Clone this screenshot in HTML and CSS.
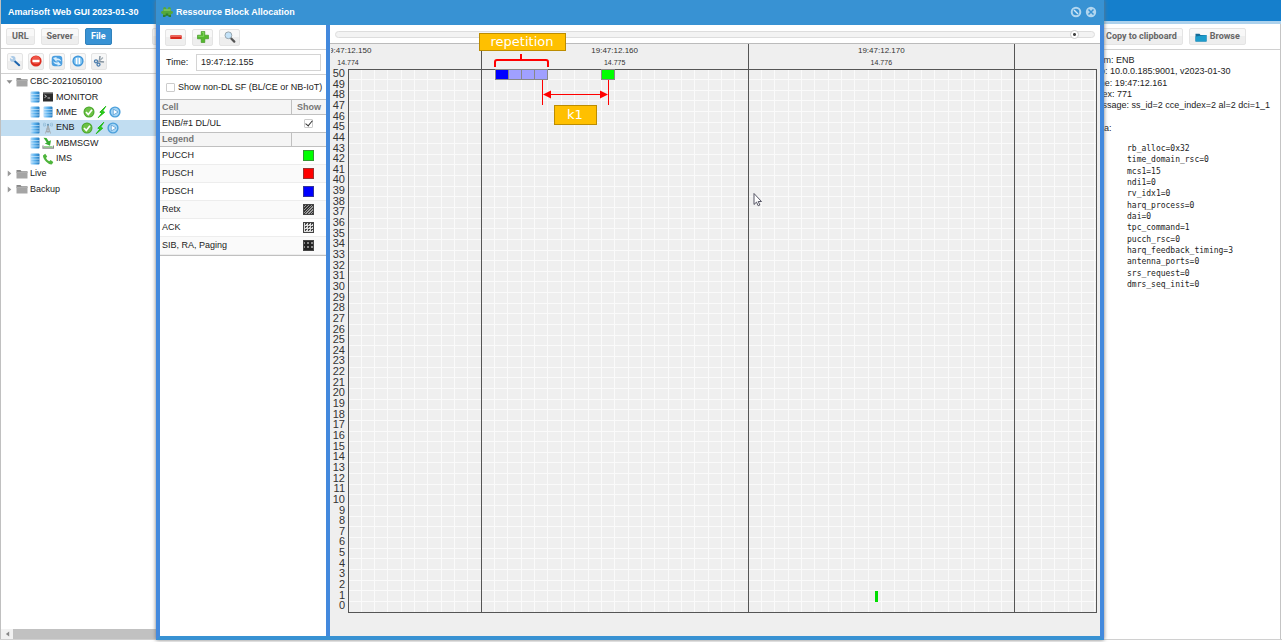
FILE: index.html
```html
<!DOCTYPE html>
<html lang="en">
<head>
<meta charset="utf-8">
<title>Amarisoft Web GUI</title>
<link rel="stylesheet" href="styles.css">
</head>
<body>
<svg class="defs" aria-hidden="true">
  <defs>
    <linearGradient id="gBlue" x1="0" x2="1"><stop offset="0" stop-color="#b5dcfa"/><stop offset=".45" stop-color="#5db4f0"/><stop offset="1" stop-color="#2479bd"/></linearGradient>
    <symbol id="db" viewBox="0 0 12 12"><rect x="1.500" y=".5" width="9" height="11" rx="1" fill="url(#gBlue)"/><path d="M1.500 3.500h9M1.500 6.200h9M1.500 9h9" stroke="#dff1fd" stroke-width=".6"/></symbol>
    <symbol id="term" viewBox="0 0 12 12"><rect x="1" y="1.500" width="10" height="9" fill="#2c2c2c"/><path d="M1 2h10" stroke="#888"/><path d="M2.500 4l2 1.300-2 1.300M5.500 7h2.500" stroke="#eee" stroke-width=".8" fill="none"/></symbol>
    <symbol id="ok" viewBox="0 0 12 12"><circle cx="6" cy="6" r="5.500" fill="#48a62b"/><circle cx="6" cy="6" r="4.500" fill="#6dc145"/><path d="M3 6l2.300 2.500L9 3.800" stroke="#fff" stroke-width="1.700" fill="none"/></symbol>
    <symbol id="bolt" viewBox="0 0 12 12"><path d="M9.800 .3L3.800 6.200l2.200.7L2.200 11.700 8.700 6.200 6.500 5.300z" fill="#2fd41b" stroke="#19b70d" stroke-width=".9"/></symbol>
    <symbol id="play" viewBox="0 0 12 12"><circle cx="6" cy="6" r="5.600" fill="#4b9fdb"/><circle cx="6" cy="6" r="4.200" fill="#a5d5f5"/><path d="M4.300 3L9 6 4.300 9z" fill="#fff" stroke="#3b88c8" stroke-width=".6"/></symbol>
    <symbol id="antenna" viewBox="0 0 12 12"><path d="M6 3.500L3.500 11.500M6 3.500L8.500 11.500M4.500 7h3M4 9.500h4M6 3v8" stroke="#a2a8ac" stroke-width=".9" fill="none"/><path d="M3.600 1.300q-1 1.400 0 2.900M8.400 1.300q1 1.400 0 2.900M2.200 .7q-1.400 2 0 4M9.800 .7q1.400 2 0 4" stroke="#7daecd" stroke-width=".7" fill="none"/><circle cx="6" cy="2.700" r="1" fill="#6693b2"/></symbol>
    <symbol id="down" viewBox="0 0 12 12"><path d="M1 8.500v2.700h10.500V8.500" stroke="#8a8a8a" stroke-width="1.200" fill="none"/><path d="M2 9.900h8.500" stroke="#55b64d"/><path d="M1.500 .8L4.500 1l2.200 3.200L9 3.300 8 8.700 2.800 6.500l2-1z" fill="#38ac32"/></symbol>
    <symbol id="phone" viewBox="0 0 12 12"><path d="M1 2.500L3.200 .7 5.200 3.500 4 4.900Q5 7 7.300 8.200L8.600 7l2.700 2L10 11.300Q7.500 12 4.200 8.700 .7 5 1 2.500z" fill="#4fb53c"/></symbol>
    <symbol id="folder" viewBox="0 0 12 12"><path d="M.5 2h4l1 1.300h6V5H.5z" fill="#888"/><path d="M.5 4.300h11V10.500H.5z" fill="#a5a5a5"/><path d="M.5 4.300h11" stroke="#c4c4c4" stroke-width=".6"/></symbol>
    <symbol id="wrench" viewBox="0 0 12 12"><path d="M5.500 6l4.700 4.200" stroke="#1d64ad" stroke-width="2" stroke-linecap="round"/><circle cx="3.700" cy="3.900" r="2.800" fill="#a9c9e6"/><path d="M1 2.200l2.700 1.700" stroke="#f6f6f6" stroke-width="1.300"/></symbol>
    <symbol id="stop" viewBox="0 0 12 12"><circle cx="6" cy="6" r="5.600" fill="#dd2c20"/><circle cx="6" cy="5" r="4" fill="#ef5548"/><rect x="2.500" y="4.800" width="7" height="2.400" fill="#fff"/></symbol>
    <symbol id="refresh" viewBox="0 0 12 12"><rect x=".7" y=".7" width="10.600" height="10.600" rx="3" fill="#4a9ee0"/><path d="M2 3l3.500-1v1.300q4 0 4.700 3.300Q8 4.800 5.500 5.400v1.500zM10 9.500l-3.400 1.300V9.400Q3.500 9.500 2 6.200 4 8 6.600 7.500V6z" fill="#d8effe"/></symbol>
    <symbol id="pause" viewBox="0 0 12 12"><circle cx="6" cy="6" r="5.600" fill="#3d94d8"/><circle cx="6" cy="6" r="4.300" fill="#7fc3f2"/><path d="M4.600 3v6M7.400 3v6" stroke="#fff" stroke-width="1.600"/></symbol>
    <symbol id="plug" viewBox="0 0 12 12"><path d="M7 1l-.7 5.500L11 7" stroke="#8694a0" stroke-width="1.500" fill="none"/><path d="M10 2.500L4 8" stroke="#a3adb5" stroke-width="1.200"/><circle cx="3" cy="6.300" r="1.500" fill="none" stroke="#4b7dae" stroke-width="1.300"/><circle cx="5.500" cy="9.600" r="1.500" fill="none" stroke="#4b7dae" stroke-width="1.300"/></symbol>
    <symbol id="minus" viewBox="0 0 12 12"><rect x=".3" y="4.200" width="11.400" height="3.800" rx=".6" fill="#d9261b"/><path d="M1 5.200h10" stroke="#f58178"/></symbol>
    <symbol id="plus" viewBox="0 0 12 12"><path d="M4.200 .5h3.600v3.700h3.700v3.600H7.800v3.700H4.200V7.800H.5V4.200h3.700z" fill="#54b82e" stroke="#368f17" stroke-width=".6"/><path d="M5 1.300h1.700v4H1.300" stroke="#9ae477" stroke-width=".7" fill="none"/></symbol>
    <symbol id="lens" viewBox="0 0 12 12"><path d="M6.700 7l3.600 3.600" stroke="#555" stroke-width="2.200" stroke-linecap="round"/><circle cx="4.400" cy="4.300" r="3.400" fill="#c4e3f9" stroke="#98a6af"/></symbol>
    <symbol id="puzzle" viewBox="0 0 12 12"><g fill="#55a83a"><rect x="2" y="3.200" width="8" height="6"/><circle cx="3.700" cy="2.500" r="1.500"/><circle cx="8.300" cy="2.500" r="1.500"/><circle cx="1.500" cy="6.500" r="1.400"/><circle cx="10.500" cy="6.500" r="1.400"/></g><path d="M2 9h2.700V7.600h2.600V9H10v2H7.500V9.800h-3V11H2z" fill="#2f7f2b"/><path d="M2.500 4h7" stroke="#9bd57c"/></symbol>
    <symbol id="browse" viewBox="0 0 12 12"><path d="M.5 2.800h4l1 1.200h6v6.500H.5z" fill="#156a96"/><path d="M.5 5.500L11.500 4v6.500H.5z" fill="#1c9ccc"/></symbol>
    <symbol id="none" viewBox="0 0 12 12"><circle cx="6" cy="6" r="4.300" fill="none" stroke="#b2d6ef" stroke-width="2"/><path d="M4 4l4 4" stroke="#d2e8f7" stroke-width="1.500"/></symbol>
    <symbol id="close" viewBox="0 0 12 12"><circle cx="6" cy="6" r="5.200" fill="#b2d6ef"/><path d="M3.500 3.500l5 5M8.500 3.500l-5 5" stroke="#3892d3" stroke-width="1.500"/></symbol>
    <symbol id="left" viewBox="0 0 12 12"><path d="M8 3v6L4 6z" fill="#888"/></symbol>
    <symbol id="open" viewBox="0 0 12 12"><path d="M1 4h10L6 10z" fill="#8c8c8c"/></symbol>
    <symbol id="shut" viewBox="0 0 12 12"><path d="M3 1v10l6-5z" fill="#999"/></symbol>
  </defs>
</svg>

<div class="app">
  <section class="side">
    <h1 class="bar">Amarisoft Web GUI 2023-01-30</h1>
    <div class="tools sources">
      <button class="btn">URL</button><button class="btn">Server</button><button class="btn active">File</button><button class="btn more" aria-label="More"></button>
    </div>
    <div class="tools actions">
      <button class="btn icon-btn" aria-label="Settings"><svg><use href="#wrench"/></svg></button>
      <button class="btn icon-btn" aria-label="Stop"><svg><use href="#stop"/></svg></button>
      <button class="btn icon-btn" aria-label="Refresh"><svg><use href="#refresh"/></svg></button>
      <button class="btn icon-btn" aria-label="Pause"><svg><use href="#pause"/></svg></button>
      <button class="btn icon-btn" aria-label="Disconnect"><svg><use href="#plug"/></svg></button>
    </div>
    <ul class="tree">
      <li><svg class="arrow"><use href="#open"/></svg><svg><use href="#folder"/></svg><span>CBC-2021050100</span></li>
      <li class="leaf"><svg><use href="#db"/></svg><svg><use href="#term"/></svg><span>MONITOR</span></li>
      <li class="leaf"><svg><use href="#db"/></svg><svg><use href="#db"/></svg><span>MME</span><svg class="first"><use href="#ok"/></svg><svg><use href="#bolt"/></svg><svg><use href="#play"/></svg></li>
      <li class="leaf selected"><svg><use href="#db"/></svg><svg><use href="#antenna"/></svg><span>ENB</span><svg class="first"><use href="#ok"/></svg><svg><use href="#bolt"/></svg><svg><use href="#play"/></svg></li>
      <li class="leaf"><svg><use href="#db"/></svg><svg><use href="#down"/></svg><span>MBMSGW</span></li>
      <li class="leaf"><svg><use href="#db"/></svg><svg><use href="#phone"/></svg><span>IMS</span></li>
      <li><svg class="arrow"><use href="#shut"/></svg><svg><use href="#folder"/></svg><span>Live</span></li>
      <li><svg class="arrow"><use href="#shut"/></svg><svg><use href="#folder"/></svg><span>Backup</span></li>
    </ul>
    <div class="scroll"><svg><use href="#left"/></svg><div class="thumb"></div></div>
  </section>
  <section class="details">
    <div class="bar short"></div>
    <div class="tools detail-tools">
      <button class="btn">Copy to clipboard</button>
      <button class="btn"><svg><use href="#browse"/></svg>Browse</button>
    </div>
    <div class="info">
      <p>From: ENB</p><p>Info: 10.0.0.185:9001, v2023-01-30</p><p>Time: 19:47:12.161</p><p>Index: 771</p><p>Message: ss_id=2 cce_index=2 al=2 dci=1_1</p><p>&nbsp;</p><p>Data:</p>
    </div>
    <div class="data">
      <code>rb_alloc=0x32</code><code>time_domain_rsc=0</code><code>mcs1=15</code><code>ndi1=0</code><code>rv_idx1=0</code><code>harq_process=0</code><code>dai=0</code><code>tpc_command=1</code><code>pucch_rsc=0</code><code>harq_feedback_timing=3</code><code>antenna_ports=0</code><code>srs_request=0</code><code>dmrs_seq_init=0</code>
    </div>
  </section>
</div>

<div class="window" role="dialog" aria-labelledby="win-title">
  <header class="win-head">
    <svg><use href="#puzzle"/></svg><h2 id="win-title">Ressource Block Allocation</h2>
    <button class="win-btn" aria-label="Reset"><svg><use href="#none"/></svg></button>
    <button class="win-btn" aria-label="Close"><svg><use href="#close"/></svg></button>
  </header>
  <div class="win-body">
    <div class="options">
      <div class="tools zoom-tools">
        <button class="btn" aria-label="Zoom out"><svg><use href="#minus"/></svg></button>
        <button class="btn" aria-label="Zoom in"><svg><use href="#plus"/></svg></button>
        <button class="btn" aria-label="Search"><svg><use href="#lens"/></svg></button>
      </div>
      <div class="field"><label for="time">Time:</label><input id="time" type="text" value="19:47:12.155"></div>
      <div class="check"><input id="nondl" type="checkbox"><label for="nondl">Show non-DL SF (BL/CE or NB-IoT)</label></div>
      <table class="cells">
        <thead><tr><th>Cell</th><th class="mark">Show</th></tr></thead>
        <tbody><tr><td><label for="cell1">ENB/#1 DL/UL</label></td><td class="mark"><input id="cell1" class="tick" type="checkbox" checked></td></tr></tbody>
      </table>
      <table class="legend">
        <thead><tr><th>Legend</th><th class="mark"></th></tr></thead>
        <tbody>
          <tr><td>PUCCH</td><td class="mark"><i class="swatch pucch"></i></td></tr>
          <tr><td>PUSCH</td><td class="mark"><i class="swatch pusch"></i></td></tr>
          <tr><td>PDSCH</td><td class="mark"><i class="swatch pdsch"></i></td></tr>
          <tr><td>Retx</td><td class="mark"><i class="swatch retx"></i></td></tr>
          <tr><td>ACK</td><td class="mark"><i class="swatch ack"></i></td></tr>
          <tr><td>SIB, RA, Paging</td><td class="mark"><i class="swatch sib"></i></td></tr>
        </tbody>
      </table>
    </div>
    <div class="plot">
      <div class="slider"><input type="range" aria-label="Position" min="0" max="100" value="98"></div>
      <svg class="chart" viewBox="330 44 770 592" preserveAspectRatio="xMinYMin meet">
        <defs><clipPath id="area"><rect x="331" y="44" width="769" height="592"/></clipPath></defs>
        <g id="axes" clip-path="url(#area)"></g>
        <g class="blocks">
          <rect x="495.500" y="69.500" width="13" height="10" fill="#00f"/>
          <rect x="508.500" y="69.500" width="13" height="10" fill="#a0a0ff"/>
          <rect x="521.500" y="69.500" width="13" height="10" fill="#a0a0ff"/>
          <rect x="534.500" y="69.500" width="13" height="10" fill="#a0a0ff"/>
          <rect x="601.500" y="69.500" width="13" height="10" fill="#0f0"/>
          <rect class="thin" x="875" y="591" width="3" height="11" fill="#0d0"/>
        </g>
        <g class="notes">
          <path d="M495 67v-5q0-2 2-2h24v-6v6h25q2 0 2 2v5" stroke-width="2"/>
          <path d="M542.500 80v25M608.500 80v25M548 94.500h55"/>
          <path class="head" d="M543 94.500l8-4v8zM608 94.500l-8-4v8z"/>
          <rect x="479.500" y="33.500" width="86" height="17"/>
          <rect x="554.500" y="105.500" width="42" height="19"/>
          <text x="522" y="46">repetition</text>
          <text x="575" y="119">k1</text>
        </g>
        <path d="M754 193.500v11l2.500-2.400 1.700 3.700 1.700-.8-1.700-3.500h3.300z" fill="#fff" stroke="#445" stroke-width=".9"/>
      </svg>
    </div>
  </div>
</div>
<script src="chart.js"></script>
</body>
</html>
```
FILE: styles.css
```css
* { box-sizing: border-box; }
body { margin: 0; height: 100vh; overflow: hidden; position: relative; background: #fff; color: #222; font: 9px/11px "Liberation Sans", Arial, sans-serif; }
h1, h2, p, ul { margin: 0; padding: 0; list-style: none; }
button, input { font: inherit; color: inherit; margin: 0; }
svg { width: 12px; height: 12px; flex: none; display: block; }
.defs { position: absolute; width: 0; height: 0; }

.app { display: flex; justify-content: space-between; height: calc(100vh - 2px); border-bottom: 1px solid #d0d0d0; }
.side { width: 200px; display: flex; flex-direction: column; border-left: 1px solid #c0c0c0; }
.bar { height: 24px; padding: 6px 7px; background: #157fcc; color: #fff; font: bold 9px/12px "Liberation Sans", Arial, sans-serif; white-space: nowrap; }
.bar.short { border-bottom: 3px solid #add2ed; }
.tools { height: 25px; display: flex; align-items: center; border-bottom: 1px solid #d0d0d0; }
.btn { height: 17px; padding: 0 5px; display: flex; align-items: center; justify-content: center; gap: 3px; border: 1px solid #e4e4e4; border-radius: 2px; background: linear-gradient(#f8f8f8 50%, #eee 50%); color: #666; font: bold 9px/11px Roboto, sans-serif; white-space: nowrap; }
.btn.active { background: #3892d4; border-color: #3081bb; color: #fff; }
.sources { padding-left: 5px; gap: 6px; }
.sources .more { width: 40px; margin-left: 34px; }
.actions { padding-left: 6px; gap: 5px; }
.icon-btn { width: 16px; padding: 0; }
.tree { height: 123px; display: grid; grid-template-rows: repeat(8, 1fr); }
.tree li { display: flex; align-items: center; padding-left: 5px; gap: 2px; }
.tree li.leaf { padding-left: 28px; gap: 1px; }
.tree .arrow { width: 7px; height: 7px; margin-right: 1px; }
.tree .selected { background: #c1ddf1; }
.tree .first { margin-left: 5px; }
.tree .leaf span { margin-left: 1px; }
.scroll { margin-top: auto; height: 10px; padding-left: 1px; display: flex; background: #f1f1f1; }
.scroll svg { width: 11px; height: 10px; }
.thumb { flex: 1; background: #c1c1c1; }

.details { width: 197px; border-right: 1px solid #c4c4c4; margin-right: 1px; }
.details .bar { margin-right: -1px; }
.detail-tools { height: 26px; padding-left: 16px; gap: 6px; }
.info { height: 79px; margin: 5px 0 0 6px; display: flex; flex-direction: column; justify-content: space-between; white-space: nowrap; }
.data { height: 147px; margin: 9px 0 0 43px; display: flex; flex-direction: column; justify-content: space-between; }
.data code { font: 8px/11px "DejaVu Sans Mono", monospace; }

.window { position: absolute; left: 156px; right: 178px; top: 0; bottom: 2px; display: flex; flex-direction: column; border: 4px solid #4389dd; border-top: 0; border-bottom-color: #3892d3; background: #4389dd; box-shadow: 0 0 4px #777; }
.win-head { height: 25px; flex: none; margin: 0 -4px; padding: 0 7px 1px 5px; display: flex; align-items: center; gap: 3px; background: #3892d3; color: #fff; }
.win-head h2 { flex: 1; font: bold 9px/12px "Liberation Sans", Arial, sans-serif; }
.win-btn { padding: 0; border: 0; background: none; }
.win-body { flex: 1; min-height: 0; display: flex; gap: 4px; }
.options { width: 166px; background: #fff; }
.zoom-tools { padding-left: 5px; gap: 6px; }
.zoom-tools .btn { width: 21px; padding: 0; }
.field { height: 25px; display: flex; align-items: center; padding: 0 5px 0 6px; border-bottom: 1px solid #d0d0d0; }
.field label { width: 30px; }
.field input { flex: 1; min-width: 0; height: 17px; padding: 0 4px; border: 1px solid #d4d4d4; }
.check { height: 24px; display: flex; align-items: center; padding-left: 6px; gap: 3px; white-space: nowrap; }
.check input, .tick { appearance: none; width: 9px; height: 9px; border: 1px solid #ccc; border-radius: 1px; background: #fff; }
.tick { display: block; margin: auto; position: relative; }
.tick::after { content: ""; position: absolute; left: 2px; top: -1px; width: 3px; height: 6px; border: solid #333; border-width: 0 1px 1px 0; transform: rotate(40deg); }
table { width: 100%; table-layout: fixed; border-collapse: separate; border-spacing: 0; }
th, td { height: 18px; padding: 0 2px; text-align: left; border-bottom: 1px solid #ededed; }
th { height: 15px; background: #f5f5f5; color: #777; border-top: 1px solid #c0c0c0; border-bottom-color: #c0c0c0; }
.cells th { height: 16px; }
.mark { width: 35px; text-align: center; }
th.mark { border-left: 1px solid #c0c0c0; }
.cells td { height: 17px; border: 0; }
.legend { border-bottom: 1px solid #c0c0c0; }
.legend tbody tr:nth-child(even) { background: #fafafa; }
.swatch { display: block; width: 11px; height: 11px; margin: auto; border: 1px solid #444; }
.pucch { background: #0f0; border-color: #393; }
.pusch { background: #f00; border-color: #933; }
.pdsch { background: #00f; border-color: #339; }
.retx { background: repeating-linear-gradient(135deg, #333 0 1px, #999 1px 2px); }
.ack { background: conic-gradient(#444 25%, #ddd 0) 0 0 / 3px 3px; }
.sib { background: conic-gradient(#888 25%, #222 0) 1px 1px / 4px 4px; }

.plot { flex: 1; min-width: 0; display: flex; flex-direction: column; background: #efefef; }
.slider { height: 19px; flex: none; padding: 0 5px; display: flex; align-items: center; background: #fff; border-bottom: 1px solid #bbb; }
.slider input { appearance: none; width: 100%; height: 7px; border: 1px solid #ddd; border-radius: 4px; background: #f3f3f3; }
.slider input::-webkit-slider-thumb { appearance: none; width: 9px; height: 9px; border: 1px solid #ccc; border-radius: 5px; background: radial-gradient(#444 0 1px, #fff 2px); }
.chart { width: 100%; height: auto; flex: 1; min-height: 0; overflow: visible; }
.grid-line { stroke: #fafafa; stroke-width: 1; }
.frame { fill: none; stroke: #555; }
.row-label { font-size: 11px; fill: #333; text-anchor: end; }
.time-label { font-size: 8px; fill: #333; text-anchor: middle; }
.frame-label { font-size: 7px; fill: #333; text-anchor: middle; }
.blocks rect { stroke: #888; stroke-width: 1; }
.blocks .thin { stroke: none; }
.notes path { fill: none; stroke: #f00; }
.notes .head { fill: #f00; stroke: none; }
.notes rect { fill: #ffc000; stroke: #bc8c00; }
.notes text { fill: #fff; font: 13px "DejaVu Sans", sans-serif; text-anchor: middle; }
```
FILE: chart.js
```js
const axes = document.getElementById("axes");
const plot = { left: 348, right: 1097, top: 69, bottom: 612 };
const rows = 51;
const slot = 40 / 3;

function add(name, attrs, text) {
  const el = document.createElementNS("http://www.w3.org/2000/svg", name);
  for (const key in attrs) el.setAttribute(key, attrs[key]);
  if (text) el.textContent = text;
  axes.appendChild(el);
}
const snap = v => Math.floor(v) + 0.5;

const rowHeight = (plot.bottom - plot.top) / rows;
for (let i = 0; i < rows; i++) {
  const y = plot.top + i * rowHeight;
  if (i) add("path", { class: "grid-line", d: `M${plot.left} ${snap(y)}H${plot.right}` });
  add("text", { class: "row-label", x: 345, y: Math.round(y + 8) }, String(rows - 1 - i));
}
for (let x = plot.left + slot; x < plot.right; x += slot) {
  add("path", { class: "grid-line", d: `M${snap(x)} ${plot.top}V${plot.bottom}` });
}
add("rect", { class: "frame", x: 348.5, y: 69.5, width: 748, height: 543 });
for (const x of [481.5, 748.5, 1014.5]) {
  add("path", { class: "frame", d: `M${x} 44V612` });
}
[["19:47:12.150", "14.774"], ["19:47:12.160", "14.775"], ["19:47:12.170", "14.776"]].forEach(([time, frame], i) => {
  const x = plot.left + i * slot * 20;
  add("text", { class: "time-label", x, y: 53 }, time);
  add("text", { class: "frame-label", x, y: 65 }, frame);
});
```
